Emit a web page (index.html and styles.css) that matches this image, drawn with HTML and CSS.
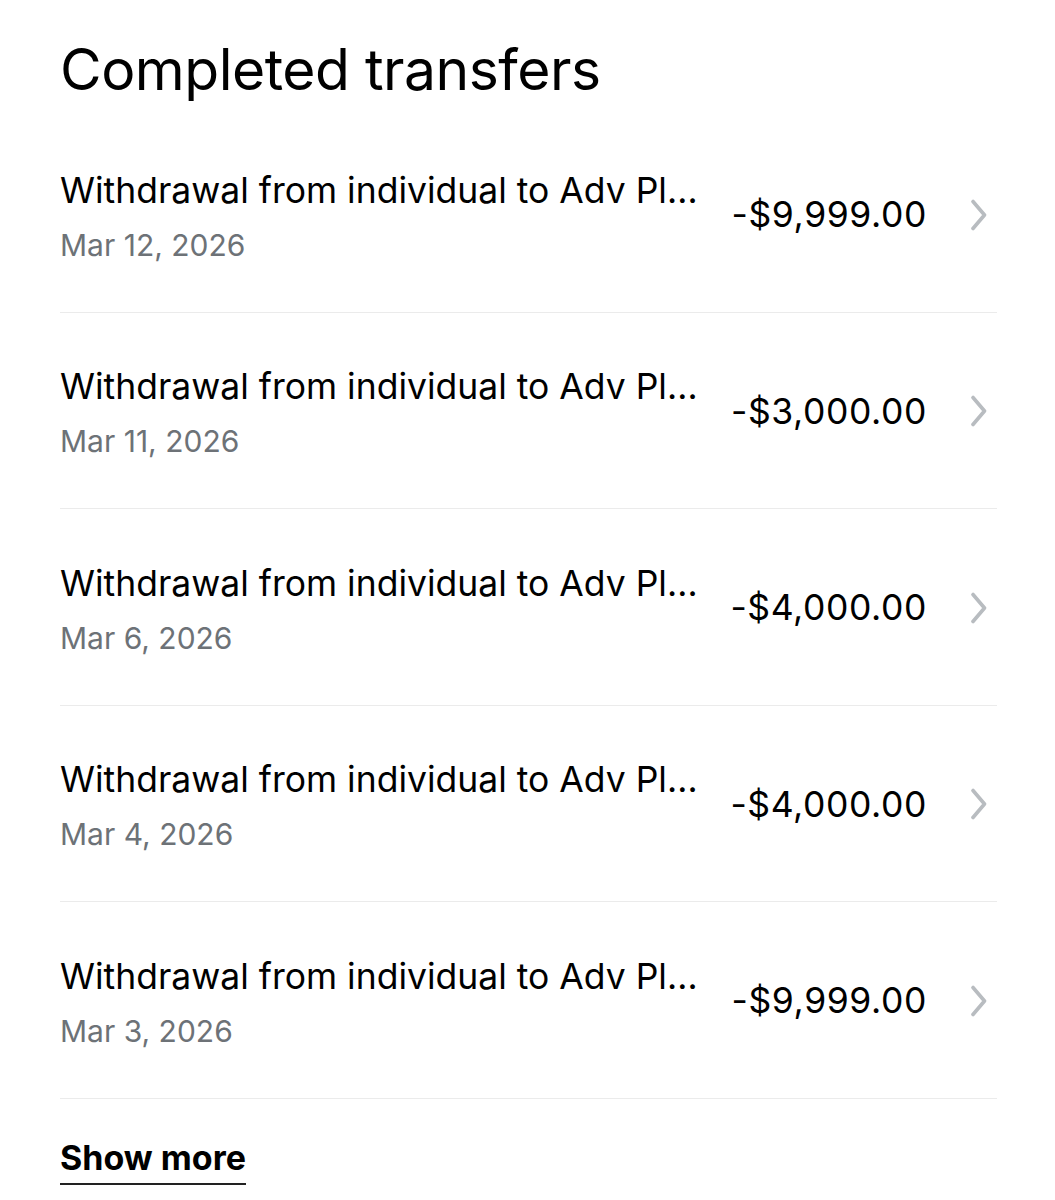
FILE: index.html
```html
<!DOCTYPE html>
<html lang="en">
<head>
<meta charset="utf-8">
<title>Completed transfers</title>
<link rel="stylesheet" href="styles.css">
</head>
<body>
<main class="page">
  <h1 class="heading">Completed transfers</h1>
  <ul class="list">
    <li class="row">
      <div class="info">
        <div class="title">Withdrawal from individual to Adv Pl…</div>
        <div class="date">Mar 12, 2026</div>
      </div>
      <div class="amount">-$9,999.00</div>
      <svg class="chev" viewBox="0 0 20 32" width="20" height="32"><path d="M4 2.5 L15.5 16 L4 29.5" fill="none" stroke="#b8bcc0" stroke-width="3.6" stroke-linecap="round" stroke-linejoin="round"/></svg>
    </li>
    <li class="row">
      <div class="info">
        <div class="title">Withdrawal from individual to Adv Pl…</div>
        <div class="date">Mar 11, 2026</div>
      </div>
      <div class="amount">-$3,000.00</div>
      <svg class="chev" viewBox="0 0 20 32" width="20" height="32"><path d="M4 2.5 L15.5 16 L4 29.5" fill="none" stroke="#b8bcc0" stroke-width="3.6" stroke-linecap="round" stroke-linejoin="round"/></svg>
    </li>
    <li class="row">
      <div class="info">
        <div class="title">Withdrawal from individual to Adv Pl…</div>
        <div class="date">Mar 6, 2026</div>
      </div>
      <div class="amount">-$4,000.00</div>
      <svg class="chev" viewBox="0 0 20 32" width="20" height="32"><path d="M4 2.5 L15.5 16 L4 29.5" fill="none" stroke="#b8bcc0" stroke-width="3.6" stroke-linecap="round" stroke-linejoin="round"/></svg>
    </li>
    <li class="row">
      <div class="info">
        <div class="title">Withdrawal from individual to Adv Pl…</div>
        <div class="date">Mar 4, 2026</div>
      </div>
      <div class="amount">-$4,000.00</div>
      <svg class="chev" viewBox="0 0 20 32" width="20" height="32"><path d="M4 2.5 L15.5 16 L4 29.5" fill="none" stroke="#b8bcc0" stroke-width="3.6" stroke-linecap="round" stroke-linejoin="round"/></svg>
    </li>
    <li class="row">
      <div class="info">
        <div class="title">Withdrawal from individual to Adv Pl…</div>
        <div class="date">Mar 3, 2026</div>
      </div>
      <div class="amount">-$9,999.00</div>
      <svg class="chev" viewBox="0 0 20 32" width="20" height="32"><path d="M4 2.5 L15.5 16 L4 29.5" fill="none" stroke="#b8bcc0" stroke-width="3.6" stroke-linecap="round" stroke-linejoin="round"/></svg>
    </li>
  </ul>
  <a class="more" href="#">Show more</a>
</main>
</body>
</html>
```
FILE: styles.css
```css
html, body {
  margin: 0;
  padding: 0;
  background: #ffffff;
}
body {
  font-family: Inter, "Liberation Sans", Arial, sans-serif;
  color: #000000;
}
.page {
  padding: 0 58px 40px 60px;
}
.heading {
  margin: 0;
  padding-top: 34px;
  height: 82px;
  font-size: 57px;
  line-height: 72px;
  font-weight: 400;
  letter-spacing: -0.5px;
}
.list {
  list-style: none;
  margin: 0;
  padding: 0;
}
.row {
  display: flex;
  align-items: center;
  height: 195.5px;
  border-bottom: 1px solid #ebebeb;
}
.info {
  flex: 1;
  min-width: 0;
  padding-top: 6px;
}
.title {
  font-size: 35.5px;
  line-height: 44px;
  white-space: nowrap;
}
.date {
  margin-top: 12px;
  font-size: 30px;
  line-height: 40px;
  color: #6d7277;
}
.amount {
  padding-top: 3px;
  font-size: 35.5px;
  line-height: 44px;
  letter-spacing: 0.6px;
  margin-right: 42px;
}
.chev {
  display: block;
  margin-right: 8px;
  padding-top: 2px;
}
.more {
  display: inline-block;
  margin-top: 39px;
  font-size: 34px;
  line-height: 40px;
  font-weight: 700;
  color: #000000;
  text-decoration: none;
  border-bottom: 2px solid #222222;
  padding-bottom: 5px;
}
```
